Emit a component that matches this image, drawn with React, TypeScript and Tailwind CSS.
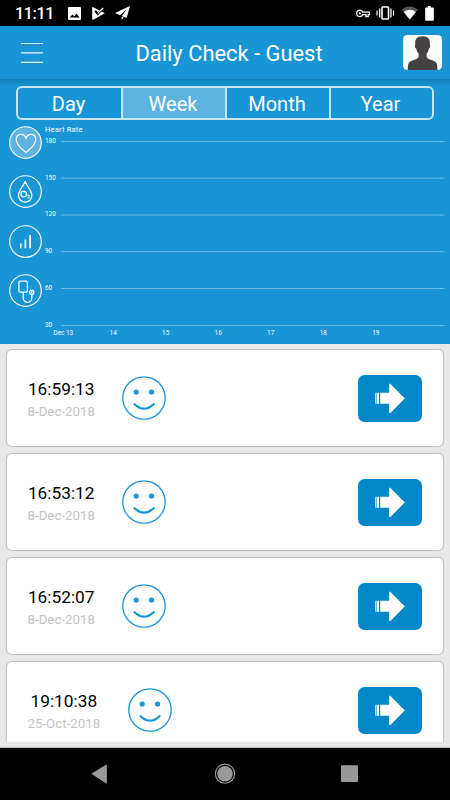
import React from "react";

const readings = [
  { time: "16:59:13", date: "8-Dec-2018" },
  { time: "16:53:12", date: "8-Dec-2018" },
  { time: "16:52:07", date: "8-Dec-2018" },
  { time: "19:10:38", date: "25-Oct-2018" },
];

const grid = [
  { label: "180", y: 141.5 },
  { label: "150", y: 178.2 },
  { label: "120", y: 215 },
  { label: "90", y: 251.7 },
  { label: "60", y: 288.5 },
  { label: "30", y: 325.5 },
];

const days = [
  { label: "Dec 13", x: 63.3 },
  { label: "14", x: 113.2 },
  { label: "15", x: 165.7 },
  { label: "16", x: 218.2 },
  { label: "17", x: 270.7 },
  { label: "18", x: 323.3 },
  { label: "19", x: 375.8 },
];

function StatusBar() {
  return (
    <div className="flex h-[26px] shrink-0 items-center bg-black pl-[15px] text-white">
      <span className="w-[52px] pt-[2px] text-[16px] leading-none font-medium tracking-[-0.3px]">11:11</span>
      <svg className="h-[26px] w-[70px]" viewBox="67 0 70 26" fill="#fff">
        <path fillRule="evenodd" d="M69 7h11a1 1 0 0 1 1 1v11a1 1 0 0 1-1 1h-11a1 1 0 0 1-1-1V8a1 1 0 0 1 1-1zm.8 10.5h9.8l-3.1-4-2.4 3-1.7-2z" />
        <path d="M92.8 7L104.8 13.2 93.2 19.8q-1 0-1-.8V7.8q0-.8.6-.8z" />
        <path d="M95.2 10.6l2.6 2.6 5.6-5.6" fill="none" stroke="#000" strokeWidth="1.5" />
        <path d="M98 8.5l5-3 2 3.5-2 2z" fill="#000" />
        <path d="M95 11.5l2.8 2.8 6-6" fill="none" stroke="#000" strokeWidth="1.3" />
        <path d="M97.8 12.2l4.8-4.8 1 1-5.8 5.6z" />
        <path d="M130 6l-3.4 12-4.8-2 5.3-7.2-7 6.4-5-2.1zM121.5 16.7l2.2.9-2 2.5z" />
      </svg>
      <svg className="mr-[16px] ml-auto h-[26px] w-[80px]" viewBox="354 0 80 26" fill="#fff">
        <path fill="none" stroke="#fff" strokeWidth="1.3" d="M362.8 12.2a3.2 3.2 0 1 0 0 2.4h3.2v2h2.2v-2h1.3v-2.4z" />
        <circle cx="359.8" cy="13.4" r="1.1" />
        <rect x="382" y="7" width="6.5" height="12" rx=".7" fill="none" stroke="#fff" strokeWidth="1.6" />
        <path d="M379 8.5h1.3v9H379zM376.5 10.5h1.2v5h-1.2zM390.3 8.5h1.3v9h-1.3zM392.9 10.5h1.2v5h-1.2z" />
        <path fill="#555" d="M401.5 9.5q8.2-6 16.5 0l-8.2 10z" />
        <path d="M403.7 12q6-4.5 12.2 0l-6.1 7.5z" />
        <path d="M427.8 6h3v1.5h2.3q.7 0 .7.7v11.7q0 .8-.8.8h-7q-.8 0-.8-.8V8.2q0-.7.7-.7h1.9z" />
      </svg>
    </div>
  );
}

function Header() {
  return (
    <header className="flex h-[53px] shrink-0 items-center bg-[#1795d4] pr-2 pl-[21px]">
      <svg className="h-[22px] w-[22px]" viewBox="0 0 22 22" stroke="#fff" strokeWidth="1.2" strokeOpacity=".95">
        <path d="M0 1.5h22M0 10.9h22M0 20.3h22" />
      </svg>
      <h1 className="ml-[12px] flex-1 pt-[2px] text-center text-[21.9px] leading-none font-normal whitespace-nowrap text-white">
        Daily Check - Guest
      </h1>
      <svg className="h-[35px] w-[39px]" viewBox="0 0 39 35">
        <rect width="39" height="35" rx="4.5" fill="#fff" />
        <path fill="#454140" d="M4.8 35c.2-7 .7-7.9 4.2-9.3 3.3-1.3 6-1.6 6.6-4.2v-3.1c-1.5-1.2-2-3-2.3-4.7-1.5-.3-1.7-3.1-1-4C11.6 3.9 14 1.2 19.5 1.2S27.3 4 26.9 9.7c.7.9.4 3.7-1 4-.3 1.7-.8 3.5-2.3 4.7v3.1c.7 2.6 3.4 2.9 6.7 4.2 3.4 1.4 4 2.3 4.2 9.3z" />
      </svg>
    </header>
  );
}

const tabs = [
  { name: "Day", style: "border-r-2" },
  { name: "Week", style: "bg-[#5db4e0] border-r-2" },
  { name: "Month", style: "border-r-2" },
  { name: "Year", style: "" },
];

function Metric({ active = false, children }: { active?: boolean; children: React.ReactNode }) {
  return (
    <svg className="h-[33px] w-[33px]" viewBox="-16.5 -16.5 33 33" fill="none" stroke="#fff" strokeWidth="1.25" strokeLinecap="round" strokeLinejoin="round">
      <circle r="15.8" fill={active ? "#5db4e0" : "none"} strokeWidth="1.15" />
      {children}
    </svg>
  );
}

function Chart() {
  return (
    <div className="flex flex-1">
      <div className="flex w-[45px] flex-col gap-[16.4px] pt-[6px] pl-[9px]">
        <Metric active>
          <path d="M.5 9.8C-3 6.8-9.2 3.3-9.2-3c0-6.2 8-7 9.7-1 1.7-6 9.7-5.2 9.7 1C10.2 3.3 4 6.8.5 9.8z" />
        </Metric>
        <Metric>
          <path d="M-.3-10C-2-5.5-7-1-7 4a6.7 6.7 0 0 0 13.4 0C6.4-1 1.3-5.5-.3-10z" />
          <circle cx="-1.8" cy="2.6" r="2.8" />
          <path d="M1.9 3.9q2.3-1.3 2.2.3l-2 2.1h2.6" strokeWidth=".8" />
        </Metric>
        <Metric>
          <path d="M-4.7 2v4.8M-.1-2v8.8M4.6-6.6V6.8" strokeWidth="1.7" strokeLinecap="butt" />
        </Metric>
        <Metric>
          <rect x="-6.6" y="-9.4" width="8.5" height="11" rx="1.2" />
          <path d="M-2.3 1.8v5.7a4.3 4.3 0 0 0 8.6 0V4.3" />
          <circle cx="6.2" cy="1.8" r="2.2" />
          <path d="M6.2 1v1.6M5.4 1.8H7" strokeWidth=".8" />
        </Metric>
      </div>
      <svg className="h-[224px] w-[405px]" viewBox="45 120 405 224" fill="#fff" fontSize="6.4">
        <text x="45" y="131.7" fontSize="7.5" textLength="37.5">Heart Rate</text>
        {grid.map((g) => (
          <g key={g.label}>
            <text x="45" y={g.y + 1.3}>{g.label}</text>
            <path d={`M61 ${g.y}H444.5`} stroke="#fff" strokeOpacity=".35" />
          </g>
        ))}
        {days.map((d) => (
          <text key={d.label} x={d.x} y="334.9" textAnchor="middle">{d.label}</text>
        ))}
      </svg>
    </div>
  );
}

function Reading({ time, date }: { time: string; date: string }) {
  return (
    <article className="flex h-[98px] shrink-0 items-center rounded-[6px] border border-[#c4c4c4] bg-white pr-[21.5px] pl-[20.5px] shadow-[0_0_1px_#bbb]">
      <div className="flex flex-col items-center gap-[7px] pt-[3px]">
        <span className="text-[17.3px] leading-[18px] text-black">{time}</span>
        <span className="text-[13.3px] leading-[14px] text-[#c4c4c4]">{date}</span>
      </div>
      <svg className="ml-[27.5px] h-[44px] w-[44px]" viewBox="-22 -22 44 44" fill="none" stroke="#1795d8">
        <circle r="21.2" strokeWidth="1.3" />
        <g fill="#1795d8" stroke="none">
          <circle cx="-7.8" cy="-6" r="2.6" />
          <circle cx="7.6" cy="-6" r="2.6" />
        </g>
        <path d="M-9.4 6.2Q0 15.2 9.6 6.2" strokeWidth="2.2" strokeLinecap="round" />
      </svg>
      <svg className="mt-[1px] ml-auto h-[47px] w-[64px]" viewBox="0 0 64 47">
        <rect width="64" height="47" rx="6.5" fill="#0287c9" />
        <path fill="#fff" d="M17.3 17.7h.9v11h-.9zM18.8 17.7h2.2v11h-2.2zM22.2 17.7H31V8.8h1.4L46.8 23.5 32.4 38H31v-9.3h-8.8z" />
      </svg>
    </article>
  );
}

export default function App() {
  return (
    <div className="flex h-[800px] w-[450px] flex-col overflow-hidden bg-[#e8e8e8] font-['Roboto',sans-serif]">
      <StatusBar />
      <Header />
      <section className="flex h-[265px] shrink-0 flex-col bg-[#1795d4]">
        <div className="h-[7px] bg-linear-to-b from-[#1382bb] to-[#1693d1]" />
        <nav className="mx-4 grid h-[34px] shrink-0 grid-cols-[105px_104px_104px_1fr] overflow-hidden rounded-[6px] border-2 border-[#c5e4f4]">
          {tabs.map((t) => (
            <div key={t.name} className={`flex items-center justify-center border-[#c5e4f4] pt-0.5 pr-0.5 text-[20px] leading-none text-white ${t.style}`}>
              {t.name}
            </div>
          ))}
        </nav>
        <Chart />
      </section>
      <main className="mt-[5px] flex h-[393px] shrink-0 flex-col gap-[5.9px] overflow-hidden px-[6px] pt-[0.3px]">
        {readings.map((r) => (
          <Reading key={r.time} time={r.time} date={r.date} />
        ))}
      </main>
      <div className="h-[6px] shrink-0 border-b border-[#b5b5b5]" />
      <footer className="flex h-[52px] shrink-0 items-center bg-black">
        <svg className="h-[52px] w-[450px]" viewBox="0 748 450 52" fill="#999">
          <path d="M91.3 773.8L105.5 765q1.4-.8 1.4.8v16.4q0 1.5-1.4.7z" />
          <circle cx="225" cy="773.7" r="7.8" />
          <circle cx="225" cy="773.7" r="9.6" fill="none" stroke="#999" strokeWidth="1.1" />
          <rect x="341" y="765.3" width="17" height="16.7" rx="1" />
        </svg>
      </footer>
    </div>
  );
}
